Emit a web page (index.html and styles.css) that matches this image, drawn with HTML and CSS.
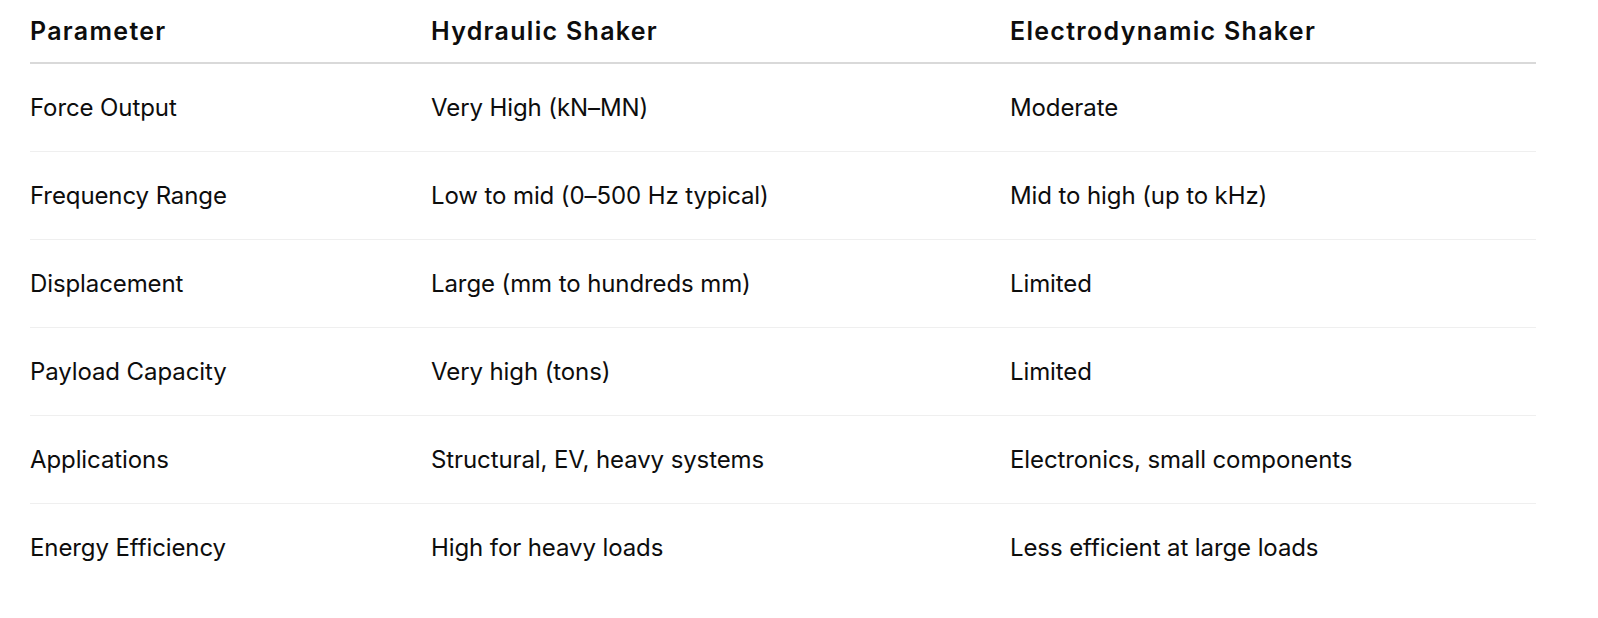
FILE: index.html
```html
<!DOCTYPE html>
<html lang="en">
<head>
<meta charset="utf-8">
<title>Shaker comparison</title>
<link rel="stylesheet" href="styles.css">
</head>
<body>
<div class="wrap">
<table class="cmp">
  <colgroup>
    <col class="c1"><col class="c2"><col class="c3">
  </colgroup>
  <thead>
    <tr><th>Parameter</th><th>Hydraulic Shaker</th><th>Electrodynamic Shaker</th></tr>
  </thead>
  <tbody>
    <tr><td>Force Output</td><td>Very High (kN–MN)</td><td>Moderate</td></tr>
    <tr><td>Frequency Range</td><td>Low to mid (0–500 Hz typical)</td><td>Mid to high (up to kHz)</td></tr>
    <tr><td>Displacement</td><td>Large (mm to hundreds mm)</td><td>Limited</td></tr>
    <tr><td>Payload Capacity</td><td>Very high (tons)</td><td>Limited</td></tr>
    <tr><td>Applications</td><td>Structural, EV, heavy systems</td><td>Electronics, small components</td></tr>
    <tr><td>Energy Efficiency</td><td>High for heavy loads</td><td>Less efficient at large loads</td></tr>
  </tbody>
</table>
</div>
</body>
</html>
```
FILE: styles.css
```css
html, body {
  margin: 0;
  padding: 0;
  background: #ffffff;
}
body {
  font-family: Inter, "Noto Sans", "Liberation Sans", sans-serif;
  color: #0d0d0d;
}
.wrap {
  padding: 0 62px 0 30px;
}
.cmp {
  width: 1506px;
  border-collapse: collapse;
  table-layout: fixed;
}
.c1 { width: 401px; }
.c2 { width: 579px; }
.c3 { width: 526px; }
.cmp th {
  text-align: left;
  font-weight: 600;
  font-size: 25px;
  letter-spacing: 1.3px;
  height: 62px;
  padding: 0;
  vertical-align: middle;
  border-bottom: 2px solid #d9d9d9;
}
.cmp td {
  font-size: 24px;
  font-weight: 400;
  letter-spacing: -0.1px;
  height: 87px;
  padding: 0;
  vertical-align: middle;
  border-bottom: 1px solid #efefef;
}
.cmp tbody tr:last-child td {
  border-bottom: none;
}
```
